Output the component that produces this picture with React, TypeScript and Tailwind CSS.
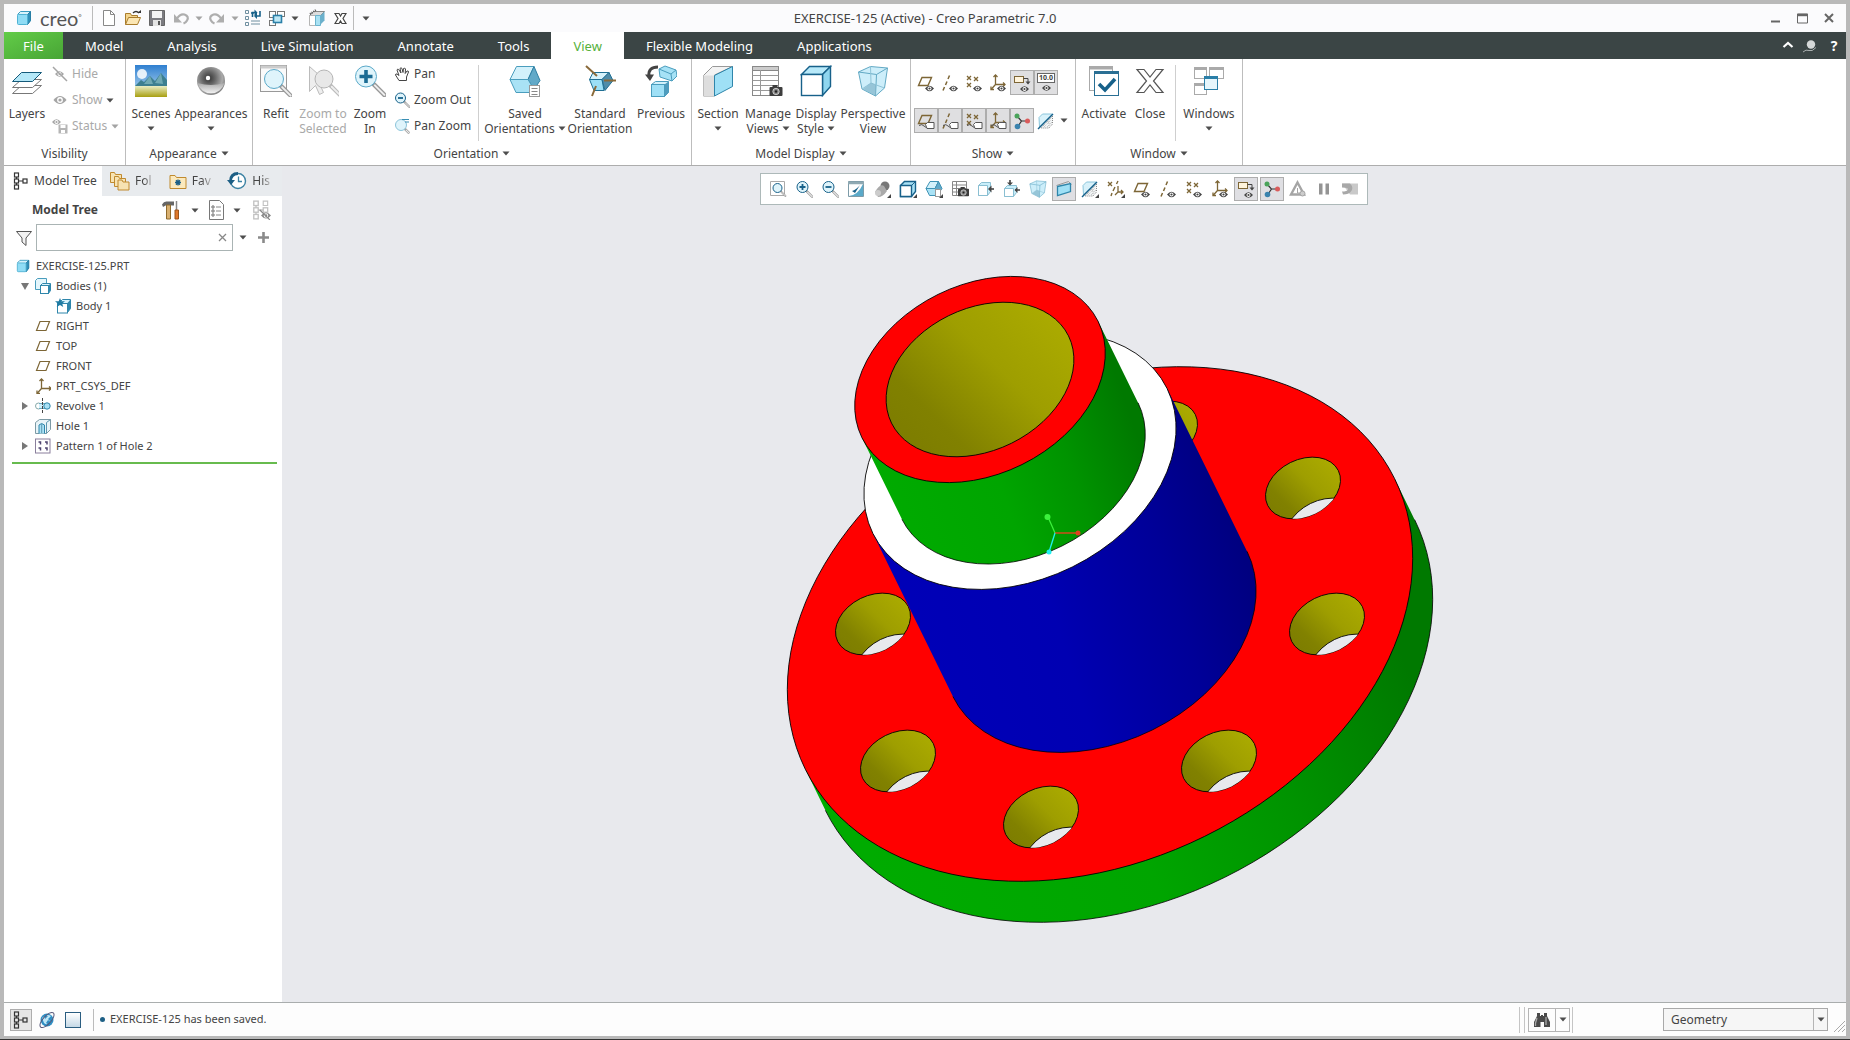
import React from "react";

type P = { children?: React.ReactNode };

const BR = "#7d6636";
const NAVY = "#17618a";

/* ---------- shared drawing helpers ---------- */

function S({ n = 16, v = n, children }: P & { n?: number; v?: number }) {
  return (
    <svg width={n} height={n} viewBox={`0 0 ${v} ${v}`} fill="none" className="shrink-0" aria-hidden="true">
      {children}
    </svg>
  );
}

function Caret({ light = false }: { light?: boolean }) {
  return (
    <svg width="8" height="5" viewBox="0 0 8 5" className="shrink-0" aria-hidden="true">
      <path d="M0.5 0.5h7L4 4.5z" fill={light ? "#a3a3a3" : "#4d4d4d"} />
    </svg>
  );
}

function Eye({ x = 0, y = 0, c = "#444" }: { x?: number; y?: number; c?: string }) {
  return (
    <g transform={`translate(${x} ${y})`}>
      <path d="M0 3Q4.500-2.500 9 3Q4.500 8.500 0 3z" fill={c} />
      <circle cx="4.500" cy="3" r="2" fill="#fff" />
      <circle cx="4.500" cy="3" r="1.100" fill={c} />
    </g>
  );
}

function Tag() {
  return (
    <g>
      <path d="M2 13.500q3-2 5 .5t4 .5" stroke="#555" />
      <path d="M8.500 12.500l2-2h6.500v6H10z" fill="#fff" stroke="#555" />
    </g>
  );
}

function Lens({ x, y, r, c = NAVY, f = "#dff4fb", h = "#999" }: { x: number; y: number; r: number; c?: string; f?: string; h?: string }) {
  const d = r * 0.75;
  return (
    <g>
      <path d={`M${x + d} ${y + d}l${r} ${r}`} stroke={h} strokeWidth={r * 0.45} strokeLinecap="round" />
      <path d={`M${x + d + 1} ${y + d + 1}l${r - 1} ${r - 1}`} stroke="#eee" strokeWidth={r * 0.2} strokeLinecap="round" />
      <circle cx={x} cy={y} r={r} fill={f} stroke={c} />
    </g>
  );
}

function Cross({ x, y, s = 4 }: { x: number; y: number; s?: number }) {
  return <path d={`M${x} ${y}l${s} ${s}m0-${s}l-${s} ${s}`} stroke={BR} strokeWidth="1.300" />;
}

function CubeShape({ n = 16, front = "#8fdcf5" }: { n?: number; front?: string }) {
  return (
    <S n={n} v={16}>
      <path d="M1.500 4.500L4.500 1.500h10v9l-3 4" fill="#d8f3fc" stroke="#3a9cc0" />
      <path d="M11.500 4.500l3-3v9l-3 4z" fill="#2f8fb8" stroke="#277ea5" />
      <rect x="1.500" y="4.500" width="10" height="10" rx="1" fill={front} stroke="#4fb2d4" />
    </S>
  );
}

function Camera({ x, y }: { x: number; y: number }) {
  return (
    <g transform={`translate(${x} ${y})`}>
      <rect y="2" width="13" height="9" rx="1" fill="#3d3d3d" />
      <rect x="3" width="5" height="3" fill="#3d3d3d" />
      <circle cx="6.500" cy="6.500" r="3.200" fill="#888" stroke="#ddd" strokeWidth=".8" />
      <circle cx="6.500" cy="6.500" r="1.200" fill="#222" />
    </g>
  );
}

/* ---------- datum icons shared by ribbon and toolbar (18 grid) ---------- */

const plane = <path d="M1.500 11.500L5 3.500h9.500l-3.500 8z" stroke={BR} strokeWidth="1.400" />;
const axis = <path d="M8.500 1.500L7 5M6 7.500l-1.500 3.500M3.500 13L2 16.500" stroke={BR} strokeWidth="1.500" />;
const points = (
  <g>
    <Cross x={2} y={2} />
    <Cross x={9} y={3} />
    <Cross x={2} y={9} />
  </g>
);
const csys = (
  <g stroke={BR} strokeWidth="1.300">
    <path d="M6.500 1v9.500H16M6.500 10.500L2 15.500" />
    <path d="M4.500 3l2-2 2 2M14 8.500l2 2-2 2M2 12.500v3h3" />
  </g>
);
const spin = (
  <g>
    <path d="M4 4l4.500 5L4.500 15M8.500 9H15" stroke="#333" strokeWidth="1.200" />
    <circle cx="4" cy="4" r="2.500" fill="#49a35a" />
    <circle cx="4.500" cy="14.500" r="2.800" fill="#3a83ae" />
    <circle cx="14.500" cy="9" r="2.500" fill="#d95b5b" />
  </g>
);
const note = (
  <g>
    <rect x="1.500" y="2.500" width="9" height="6" fill="#fff4dc" stroke={BR} />
    <path d="M10.500 4.500H15v5" stroke="#444" />
    <path d="M12.500 7.500l5 0-2.500 3z" fill="#444" />
    <Eye x={7} y={12} />
  </g>
);
const sectionMark = (
  <g>
    <path d="M2 5.500l3.500-3.500h10l-13 13z" fill="#d8f1fa" stroke="#8cc6dc" />
    <path d="M15.500 4v8l-3.500 4H4z" fill="#f2f5f6" strokeDasharray="1 1" stroke="#888" />
    <path d="M7 15l7-7M10 15l5-5M12 7v8" strokeDasharray="1 1" stroke="#bbb" />
    <path d="M1 17L16 2" stroke={NAVY} strokeWidth="1.400" />
  </g>
);
const eyed = (g: React.ReactNode) => (
  <>
    {g}
    <Eye x={8} y={11.5} />
  </>
);
const tagged = (g: React.ReactNode) => (
  <>
    {g}
    <Tag />
  </>
);

/* ---------- ribbon icons (32 grid) ---------- */

const IconLayers = (
  <S n={32}>
    <path d="M1.500 28.500l9-8h20l-9 8z" fill="#fff" stroke="#777" />
    <path d="M1.500 22.500l9-8h20l-9 8z" fill="#fff" stroke="#777" />
    <path d="M1.500 16.500l9-9h20l-9 9z" fill="#b5e8f8" stroke="#155a7a" />
  </S>
);
const IconScenes = (
  <S n={32}>
    <defs>
      <linearGradient id="sky" x1="0" y1="0" x2="0" y2="1">
        <stop offset="0" stopColor="#2f7fd0" />
        <stop offset="1" stopColor="#c9e6f5" />
      </linearGradient>
      <linearGradient id="land" x1="0" y1="0" x2="0" y2="1">
        <stop offset="0" stopColor="#e9edc4" />
        <stop offset="1" stopColor="#a89f10" />
      </linearGradient>
    </defs>
    <rect width="32" height="32" fill="url(#sky)" />
    <circle cx="7" cy="9" r="5" fill="#fff" opacity=".85" />
    <path d="M0 21l6-6 3 2 6-6 5 5 6-8 6 7v7H0z" fill="#3c7f90" />
    <path d="M15 11l3 8H9zM26 8l2 11-8-1z" fill="#6fa9b3" />
    <rect y="21" width="32" height="11" fill="url(#land)" />
  </S>
);
const IconAppear = (
  <S n={32}>
    <defs>
      <radialGradient id="ball" cx=".42" cy=".4" r=".65">
        <stop offset="0" stopColor="#333" />
        <stop offset=".35" stopColor="#666" />
        <stop offset=".75" stopColor="#aaa" />
        <stop offset="1" stopColor="#777" />
      </radialGradient>
      <linearGradient id="ballLow" x1="0" y1="0" x2="0" y2="1">
        <stop offset="0" stopColor="#aaa" />
        <stop offset="1" stopColor="#f2f2f2" />
      </linearGradient>
    </defs>
    <circle cx="16" cy="16" r="14" fill="url(#ball)" />
    <path d="M2.500 18q13.500 4 27 0A14 14 0 0 1 2.500 18z" fill="url(#ballLow)" />
    <circle cx="13" cy="13" r="2.200" fill="#fff" />
  </S>
);
const IconRefit = (
  <S n={32}>
    <rect x=".5" y=".5" width="26" height="26" fill="#fafafa" stroke="#999" />
    <path d="M.5.500h26v3H.5z" fill="#ccc" />
    <Lens x={14} y={14} r={9.5} c="#5aa9c9" />
  </S>
);
const IconZoomSel = (
  <S n={32}>
    <path d="M2.500 1.500v25l6-6 4 9 4-2-4-9 8-1z" fill="#eee" stroke="#bbb" />
    <Lens x={17} y={14} r={9} c="#b5b5b5" f="#e8e8e8" h="#bbb" />
  </S>
);
const IconZoomIn = (
  <S n={32}>
    <Lens x={12} y={11.5} r={10.5} c="#5aa9c9" />
    <path d="M12 5v13M5.500 11.500h13" stroke="#1b6c94" strokeWidth="3.600" />
  </S>
);
const IconSaved = (
  <S n={32}>
    <path d="M7.500 1.500H25l-6 13H1z" fill="#d3f1fb" stroke="#4a9dbd" />
    <path d="M25 1.500l6 14-6 9-6-10z" fill="#62a9c8" stroke="#2f7fa3" />
    <path d="M1 14.500h18l6 10-3 3H7z" fill="#a9e2f5" stroke="#4a9dbd" />
    <rect x="20.500" y="20.500" width="10" height="11" fill="#fff" stroke="#999" />
    <path d="M22.500 23.500h6m-6 3h6m-6 3h6" stroke="#888" />
  </S>
);
const IconStd = (
  <S n={32}>
    <path d="M9 7.500h16l-7 7H5.500z" fill="#d6f2fb" stroke="#1f6f93" />
    <path d="M5.500 14.500H18l2 11H10z" fill="#9bdff6" stroke="#1f6f93" />
    <path d="M25 7.500l-7 7 3 11 8-10z" fill="#4f8ca8" stroke="#1f6f93" />
    <path d="M2 1l11 10M32 15.500H20M8 31l4-10" stroke="#8a6a3a" strokeWidth="2" />
  </S>
);
const IconPrev = (
  <S n={32}>
    <path d="M13 2Q3 2 4 11" stroke="#444" strokeWidth="3" />
    <path d="M0 9.500h9L5 16z" fill="#444" />
    <path d="M14 4l6-3 11 4 1 6-5 5-12-4z" fill="#a6e2f6" stroke="#4a9dbd" />
    <path d="M31 5l-5 4-12-5M26 9l1 7" stroke="#4a9dbd" />
    <path d="M6.500 19.500l4-3h13v11l-4 4" fill="#d3f1fb" stroke="#4a9dbd" />
    <path d="M19.500 19.500l4-3v11l-4 4z" fill="#4f9cbd" />
    <rect x="6.500" y="19.500" width="13" height="12" fill="#9fe0f6" stroke="#4a9dbd" />
  </S>
);
const IconSection = (
  <S n={32}>
    <path d="M1.500 10.500l9-9h20l-18 8.500v21h-11z" fill="#f3f3f3" stroke="#999" />
    <path d="M1.500 10.500h11v20.500h-11z" fill="#dedede" />
    <path d="M12.500 10.500l18-9v20l-18 9.500z" fill="#9fe0f6" stroke="#2f86ab" />
  </S>
);
const IconManage = (
  <S n={32}>
    <rect x=".5" y="1.500" width="26" height="29" fill="#fff" stroke="#888" />
    <path d="M.5 1.500h26v4H.5z" fill="#ccc" stroke="#888" />
    <path d="M.5 10.500h26m-26 5h26m-26 5h26m-26 5h26M8.500 5v25" stroke="#999" />
    <Camera x={17.5} y={20} />
  </S>
);
const IconDisplay = (
  <S n={32}>
    <path d="M1.500 9.500l8-8h21l-8 8z" fill="#b8e9f9" stroke={NAVY} strokeWidth="1.400" />
    <path d="M22.500 9.500l8-8v20l-8 9z" fill="#8fd6ef" stroke={NAVY} strokeWidth="1.400" />
    <rect x="1.500" y="9.500" width="21" height="21" fill="#fff" stroke={NAVY} strokeWidth="1.400" />
  </S>
);
const persp = (
  <g>
    <path d="M1.500 7l12-5.500 17 1.500-3 20-9 8L5 24z" fill="#cdeefa" stroke="#62a9c4" />
    <path d="M1.500 7l18 2.500 11-6.500M19.500 9.500L18.500 31" stroke="#62a9c4" />
    <path d="M13.500 1.500L14 18 5 24M14 18l13.500 5" stroke="#8fc4d8" />
    <path d="M6 24l8-6 5 2v11z" fill="#7fb4c9" opacity=".7" />
  </g>
);
const IconActivate = (
  <S n={32}>
    <rect x="1.500" y="1.500" width="23" height="24" fill="#fff" stroke="#aaa" />
    <path d="M1.500 3h23" stroke="#aaa" strokeWidth="3" />
    <rect x="6.500" y="6.500" width="24" height="24" fill="#fff" stroke="#2a6f94" />
    <path d="M6 7.500h25" stroke="#2a6f94" strokeWidth="3" />
    <path d="M11 19l6 6 10-11" stroke="#17618a" strokeWidth="3.600" />
  </S>
);
const IconClose = (
  <S n={32}>
    <path
      d="M3 4.500h7l6 7.500 6-7.500h7L19.500 16 29 27.500h-7L16 20l-6 7.500H3L12.500 16z"
      fill="#fff"
      stroke="#555"
      strokeWidth="1.200"
    />
  </S>
);
const IconWindows = (
  <S n={32}>
    <g fill="#fff" stroke="#aaa">
      <rect x="1.500" y="2.500" width="12" height="11" />
      <rect x="16.500" y="2.500" width="14" height="11" />
      <rect x="1.500" y="18.500" width="12" height="11" />
      <path d="M1.500 4h12m3 0h14m-29 16h12" strokeWidth="2" />
    </g>
    <rect x="11.500" y="11.500" width="13" height="13" fill="#e6f6fc" stroke="#2a7fa8" />
    <path d="M11 12.500h14" stroke="#2a7fa8" strokeWidth="3" />
  </S>
);

/* ---------- small icons ---------- */

const treeGlyph = (c: string) => (
  <g stroke={c} strokeWidth="1.200">
    <rect x="2.500" y="1" width="4" height="4" />
    <rect x="2.500" y="7" width="4" height="4" />
    <rect x="2.500" y="13" width="4" height="4" />
    <rect x="11" y="7" width="4" height="4" />
    <path d="M4.500 5v2m0 4v2M6.500 9H11" />
  </g>
);
const folder = (x: number, y: number) => (
  <path d={`M${x} ${y}h4l1 2h6v8h-11z`} fill="#f7e3b2" stroke="#c08a2e" />
);
const winPair = (
  <g fill="#fff" stroke="#777">
    <rect x="1.500" y="2.500" width="6" height="6" />
    <rect x="9.500" y="2.500" width="7" height="5" />
    <rect x="1.500" y="11.500" width="6" height="5" />
    <rect x="5.500" y="6.500" width="8" height="7" fill="#bfe8f6" stroke="#2a7fa8" strokeWidth="1.600" />
  </g>
);
const undoGlyph = (
  <g>
    <path d="M5 9.500Q8 4.500 12.500 5.500q5 2 2.500 6-1 2-3.500 3" stroke="#aeaeae" strokeWidth="2.200" />
    <path d="M2 5v8.500h8z" fill="#aeaeae" />
  </g>
);

function Quick({ label, children }: P & { label: string }) {
  return (
    <button type="button" aria-label={label} className="flex h-6 w-6 items-center justify-center">
      {children}
    </button>
  );
}

function Drop({ label, light = false }: { label: string; light?: boolean }) {
  return (
    <button type="button" aria-label={label} className="flex h-6 w-3 items-center justify-center">
      <Caret light={light} />
    </button>
  );
}

/* ---------- title bar ---------- */

function TitleBar() {
  return (
    <header className="grid h-7 grid-cols-[1fr_auto_1fr] items-center bg-[#fbfbfd]">
      <div className="flex items-center">
        <span className="ml-3 flex">
          <CubeShape n={16} />
        </span>
        <span className="ml-2 font-['Lato'] text-[20px] leading-5 text-[#555]">creo</span>
        <span className="text-[8px] leading-3 text-[#555]">°</span>
        <span className="mr-1 ml-2.5 h-6 w-px bg-[#bbb]" />
        <Quick label="New">
          <S n={18}>
            <path d="M3.500 1.500h7l4 4v11h-11z" fill="#fff" stroke="#888" />
            <path d="M10.500 1.500v4h4" stroke="#888" />
          </S>
        </Quick>
        <Quick label="Open">
          <S n={18}>
            <path d="M1.500 15.500v-11h5l1 2h6v3" fill="#f3d48c" stroke="#a97c2c" />
            <path d="M1.500 15.500l3-7h12l-3 7z" fill="#fbe6b4" stroke="#a97c2c" />
            <path d="M9 4q3-3 6 0" stroke="#333" strokeWidth="1.400" />
            <path d="M13 4h4V1z" fill="#333" />
          </S>
        </Quick>
        <Quick label="Save">
          <S n={18}>
            <path d="M1.500 1.500h15v15h-15z" fill="#7b7b80" stroke="#666" />
            <rect x="4" y="2" width="10" height="7" fill="#f3f3f3" />
            <rect x="5" y="11" width="8" height="6" fill="#e3e3e3" />
            <rect x="10" y="12" width="2" height="4" fill="#555" />
          </S>
        </Quick>
        <Quick label="Undo">
          <S n={18}>{undoGlyph}</S>
        </Quick>
        <Drop label="Undo list" light />
        <Quick label="Redo">
          <S n={18}>
            <g transform="translate(18 0) scale(-1 1)">{undoGlyph}</g>
          </S>
        </Quick>
        <Drop label="Redo list" light />
        <Quick label="Regenerate">
          <S n={18}>
            <path d="M1.500 1.500h3v3h-3zM1.500 7.500h3v3h-3zM1.500 13.500h3v3h-3zM7 12h9M7 15h9" stroke="#6f8fa0" />
            <path d="M7 4h3M8.500 8V3.500h3M16 2v5h-4" stroke={NAVY} strokeWidth="1.600" />
            <path d="M10.500.5v6l3-3zM13 4v6l-3-3z" fill={NAVY} />
          </S>
        </Quick>
        <Quick label="Windows">
          <S n={18}>{winPair}</S>
        </Quick>
        <Drop label="Windows list" />
        <span className="ml-1 flex">
          <Quick label="Model view">
            <S n={18}>
              <path d="M1.500 6.500l4-4h11l-4 4z" fill="#ddd" stroke="#888" />
              <path d="M1.500 6.500h6v10h-6z" fill="#fff" stroke="#b5b5b5" />
              <path d="M7.500 6.500h5v10h-5z" fill="#a9e1f3" stroke="#6bb4ce" />
              <path d="M12.500 6.500l4-4v9l-4 4z" fill="#6bb0cc" />
              <path d="M2 5l6-4" stroke="#555" strokeDasharray="1 1" strokeWidth="2" />
            </S>
          </Quick>
        </span>
        <Quick label="Close window">
          <S n={13}>
            <path
              d="M1 1.500h4L6.500 4 8 1.500h4L9 6.500l3 5H8L6.500 9 5 11.500H1l3-5z"
              fill="#fff"
              stroke="#444"
              strokeWidth="1.200"
            />
          </S>
        </Quick>
        <span className="mr-1.5 h-6 w-px bg-[#bbb]" />
        <Drop label="Customize toolbar" />
      </div>
      <h1 className="text-[13px] leading-4 text-[#444]">EXERCISE-125 (Active) - Creo Parametric 7.0</h1>
      <div className="flex items-center justify-end gap-4 pr-3 text-[#666]">
        <button type="button" aria-label="Minimize">
          <S n={10}>
            <path d="M0 8.500h9" stroke="currentColor" strokeWidth="2" />
          </S>
        </button>
        <button type="button" aria-label="Maximize">
          <S n={11}>
            <path d="M.5 1h10v9H.5z" stroke="currentColor" />
            <path d="M0 2h11" stroke="currentColor" strokeWidth="2.400" />
          </S>
        </button>
        <button type="button" aria-label="Close">
          <S n={10}>
            <path d="M1 1l8 8m0-8L1 9" stroke="currentColor" strokeWidth="2" />
          </S>
        </button>
      </div>
    </header>
  );
}

/* ---------- tab strip ---------- */

const tabs = ["Model", "Analysis", "Live Simulation", "Annotate", "Tools", "View", "Flexible Modeling", "Applications"];

function TabStrip() {
  return (
    <nav className="flex h-[27px] bg-[#3b4545] text-[13px] text-white">
      <button type="button" className="w-[59px] bg-linear-to-br from-[#62cc48] to-[#48a535] pt-0.5">
        File
      </button>
      {tabs.map((t) => (
        <button
          key={t}
          type="button"
          className={t === "View" ? "bg-white px-[22px] pt-0.5 text-[#56b13c]" : "px-[22px] pt-0.5"}
        >
          {t}
        </button>
      ))}
      <div className="ml-auto flex items-center gap-2 pr-1">
        <button type="button" aria-label="Collapse ribbon">
          <S n={12}>
            <path d="M1.500 7L6 3l4.500 4" stroke="#fff" strokeWidth="2.200" />
          </S>
        </button>
        <button type="button" aria-label="Search commands">
          <S n={16}>
            <circle cx="9" cy="6.500" r="4.200" fill="#d5d8d8" />
            <path d="M1 14q3-3 6-1.500t7-3" stroke="#aab0b0" />
          </S>
        </button>
        <button type="button" aria-label="Help" className="w-4 text-[14px] font-bold">
          ?
        </button>
      </div>
    </nav>
  );
}

/* ---------- ribbon ---------- */

function Group({ title, caret = true, w, children }: P & { title: string; caret?: boolean; w: string }) {
  return (
    <section className={`flex flex-col border-r border-[#bdbdbd] ${w}`}>
      <div className="flex h-[82px] pt-1.5">{children}</div>
      <div className="flex items-center justify-center gap-1 pt-[5px] leading-[15px]">
        {title}
        {caret && <Caret />}
      </div>
    </section>
  );
}

function Big({ icon, a, b, caret, w, off }: { icon: React.ReactNode; a: string; b?: string; caret?: boolean; w: string; off?: boolean }) {
  return (
    <button type="button" className={`flex flex-col items-center gap-[9px] leading-[15px] ${w} ${off ? "text-[#a9a9a9]" : ""}`}>
      {icon}
      <span className="flex flex-col items-center whitespace-nowrap">
        <span>{a}</span>
        {(b || caret) && (
          <span className="flex h-[15px] items-center gap-[3px]">
            {b}
            {caret && <Caret />}
          </span>
        )}
      </span>
    </button>
  );
}

function Row({ icon, label, off, caret }: { icon: React.ReactNode; label: string; off?: boolean; caret?: boolean }) {
  return (
    <button type="button" className={`flex h-[18px] items-center gap-1 whitespace-nowrap ${off ? "text-[#a9a9a9]" : ""}`}>
      {icon}
      {label}
      {caret && <Caret light={label === "Status"} />}
    </button>
  );
}

function Toggle({ label, on, children }: P & { label: string; on?: boolean }) {
  return (
    <button
      type="button"
      aria-label={label}
      aria-pressed={!!on}
      className={`flex h-[25px] w-[24px] items-center justify-center border ${on ? "border-[#adadad] bg-[#dfdfe1]" : "border-transparent"}`}
    >
      <S n={18}>{children}</S>
    </button>
  );
}

function Ribbon() {
  return (
    <div className="flex h-[107px] overflow-hidden border-b border-[#adadad] bg-white text-[12px] text-[#444]">
      <Group title="Visibility" caret={false} w="w-[122px]">
        <Big icon={IconLayers} a="Layers" w="w-[46px]" />
        <div className="flex flex-col gap-2 pl-0.5">
          <Row
            off
            label="Hide"
            icon={
              <S n={16}>
                <Eye x={3} y={5} c="#a5a5a5" />
                <path d="M1 1l14 14" stroke="#a5a5a5" strokeWidth="1.500" />
              </S>
            }
          />
          <Row
            off
            caret
            label="Show"
            icon={
              <S n={16} v={11}>
                <Eye x={1} y={2.5} c="#a5a5a5" />
              </S>
            }
          />
          <Row
            off
            caret
            label="Status"
            icon={
              <S n={16}>
                <Eye x={0} y={1} c="#a5a5a5" />
                <path d="M6.500 6.500h9v9h-9z" fill="#b5b5b5" />
                <path d="M8.500 7h5v3h-5zM9 12h4v3H9z" fill="#fff" />
              </S>
            }
          />
        </div>
      </Group>
      <Group title="Appearance" w="w-[127px]">
        <Big icon={IconScenes} a="Scenes" caret w="w-[50px]" />
        <Big icon={IconAppear} a="Appearances" caret w="w-[70px]" />
      </Group>
      <Group title="Orientation" w="w-[439px]">
        <Big icon={IconRefit} a="Refit" w="w-[46px]" />
        <Big icon={IconZoomSel} a="Zoom to" b="Selected" off w="w-[48px]" />
        <Big icon={IconZoomIn} a="Zoom" b="In" w="w-[46px]" />
        <div className="flex w-[85px] flex-col gap-2 pl-px">
          <Row
            label="Pan"
            icon={
              <S n={16}>
                <path
                  d="M5 14.500L1.500 9q0-1.500 1.500-1l2 1.500L3 4q.5-1.500 1.700-.5L7 7 6 2.500Q7 1 8 2.500l1 4 .5-4q1.500-1 2 .5l-.3 4.500L13 5q1.500-.5 1.500 1L12.500 11v3.500z"
                  fill="#fff"
                  stroke="#444"
                />
              </S>
            }
          />
          <Row
            label="Zoom Out"
            icon={
              <S n={16}>
                <Lens x={6.5} y={6} r={5} />
                <path d="M4 6h5" stroke={NAVY} strokeWidth="1.800" />
              </S>
            }
          />
          <Row
            label="Pan Zoom"
            icon={
              <S n={16}>
                <Lens x={7} y={7} r={5.5} c="#8cc4da" />
                <path d="M8 1.500h7M11 4h4" stroke="#3a8fb4" />
              </S>
            }
          />
        </div>
        <span className="mr-[5px] h-[76px] w-px bg-[#cfcfcf]" />
        <Big icon={IconSaved} a="Saved" b="Orientations" caret w="w-[82px]" />
        <Big icon={IconStd} a="Standard" b="Orientation" w="w-[68px]" />
        <Big icon={IconPrev} a="Previous" w="w-[54px]" />
      </Group>
      <Group title="Model Display" w="w-[219px]">
        <Big icon={IconSection} a="Section" caret w="w-[52px]" />
        <Big icon={IconManage} a="Manage" b="Views" caret w="w-[48px]" />
        <Big icon={IconDisplay} a="Display" b="Style" caret w="w-[48px]" />
        <Big icon={<S n={32}>{persp}</S>} a="Perspective" b="View" w="w-[66px]" />
      </Group>
      <Group title="Show" w="w-[165px]">
        <div className="flex flex-col gap-[13px] pt-[5px] pl-[3px]">
          <div className="flex">
            <Toggle label="Plane display">{eyed(plane)}</Toggle>
            <Toggle label="Axis display">{eyed(axis)}</Toggle>
            <Toggle label="Point display">{eyed(points)}</Toggle>
            <Toggle label="Csys display">{eyed(csys)}</Toggle>
            <Toggle label="Annotation display" on>
              {note}
            </Toggle>
            <button
              type="button"
              aria-pressed="true"
              className="flex h-[25px] w-[24px] flex-col items-center justify-center border border-[#adadad] bg-[#dfdfe1]"
            >
              <span className="border border-[#666] bg-white px-px text-[7px] leading-[8px] font-bold">10.0</span>
              <S n={9} v={9}>
                <Eye x={0} y={2} />
              </S>
            </button>
          </div>
          <div className="flex items-center">
            <Toggle label="Plane tags" on>
              {tagged(plane)}
            </Toggle>
            <Toggle label="Axis tags" on>
              {tagged(axis)}
            </Toggle>
            <Toggle label="Point tags" on>
              {tagged(points)}
            </Toggle>
            <Toggle label="Csys tags" on>
              {tagged(csys)}
            </Toggle>
            <Toggle label="Spin center" on>
              {spin}
            </Toggle>
            <Toggle label="Section hatching">{sectionMark}</Toggle>
            <Drop label="Section hatching list" />
          </div>
        </div>
      </Group>
      <Group title="Window" w="w-[167px]">
        <span className="w-0.5" />
        <Big icon={IconActivate} a="Activate" w="w-[52px]" />
        <Big icon={IconClose} a="Close" w="w-[40px]" />
        <span className="mx-[5px] h-[76px] w-px bg-[#cfcfcf]" />
        <Big icon={IconWindows} a="Windows" caret w="w-[56px]" />
      </Group>
    </div>
  );
}

/* ---------- navigator ---------- */

const bodyCube = (
  <g>
    <path d="M5.500 7.500l2-2h8v7l-2 3" fill="#d8f3fc" stroke="#2f86ab" />
    <path d="M13 8l2.500-2.500v7l-2.500 3z" fill="#2f86ab" />
    <rect x="5.500" y="7.500" width="8" height="8" fill="#fff" stroke="#2f86ab" />
  </g>
);

type Node = { label: string; pad: string; arrow?: "down" | "right"; icon: React.ReactNode };

const planeIcon = (
  <S n={16}>
    <path d="M1.500 12.500l3.500-9h9.500l-3.500 9z" stroke={BR} strokeWidth="1.200" />
  </S>
);

const nodes: Node[] = [
  {
    label: "Bodies (1)",
    pad: "pl-4",
    arrow: "down",
    icon: (
      <S n={16}>
        <path d="M.5 2.500l2-2h9v8l-2 3H.5z" fill="#e4f6fc" stroke="#4a9dbd" />
        {bodyCube}
      </S>
    ),
  },
  {
    label: "Body 1",
    pad: "pl-9",
    icon: (
      <S n={16}>
        <path d="M4.500 4.500l3-3h8v9l-3 4" fill="#d8f3fc" stroke="#2f86ab" />
        <path d="M12.500 5l3-3.500v9l-3 4z" fill="#2f86ab" />
        <rect x="2.500" y="5.500" width="10" height="9.500" fill="#fff" stroke="#2f86ab" />
        <path d="M5 0l1.300 3.300H10L7.200 5.500l1 3.500L5 7 1.800 9l1-3.500L0 3.300h3.700z" fill="#1f7ba3" />
      </S>
    ),
  },
  { label: "RIGHT", pad: "pl-4", icon: planeIcon },
  { label: "TOP", pad: "pl-4", icon: planeIcon },
  { label: "FRONT", pad: "pl-4", icon: planeIcon },
  {
    label: "PRT_CSYS_DEF",
    pad: "pl-4",
    icon: <S n={16}>{csys}</S>,
  },
  {
    label: "Revolve 1",
    pad: "pl-4",
    arrow: "right",
    icon: (
      <S n={16}>
        <circle cx="3.500" cy="8" r="3" fill="#fff" stroke="#8aa" />
        <path d="M4 5.500h6v5H4" fill="#cfeffa" stroke="#6aa9c0" />
        <circle cx="12" cy="8" r="3.200" fill="#a9e1f5" stroke="#2f86ab" />
        <path d="M7.500 0v16" stroke="#444" strokeDasharray="3 1" />
      </S>
    ),
  },
  {
    label: "Hole 1",
    pad: "pl-4",
    icon: (
      <S n={16}>
        <path d="M.5 4.500l4-3h11v10l-4 4H.5z" fill="#e8f4f8" stroke="#7d9aa5" />
        <path d="M4 15.500V7q2.500-3 5.500 0v8.500" fill="#a9e1f5" stroke="#2f86ab" />
        <path d="M11.500 4.500v11M6.700 6v9M11.500 4.500l4-3" stroke="#5d98b0" />
      </S>
    ),
  },
  {
    label: "Pattern 1 of Hole 2",
    pad: "pl-4",
    arrow: "right",
    icon: (
      <S n={16}>
        <rect x=".5" y="1" width="14.500" height="14" fill="#fff" stroke="#8a7f9c" />
        <path d="M3.500 4h2v2.500M10 4h2v2.500M3.500 10h2v2.500M10 10h2v2.500" stroke="#4f4470" strokeWidth="1.500" />
      </S>
    ),
  },
];

function SideTab({ icon, label, title }: { icon: React.ReactNode; label: string; title: string }) {
  return (
    <button type="button" title={title} className="flex min-w-0 flex-1 items-center gap-[5px] pl-2">
      {icon}
      <span className="bg-linear-to-r from-[#444] from-50% to-[#bbb] bg-clip-text text-left whitespace-nowrap text-transparent">
        {label}
      </span>
    </button>
  );
}

function Navigator() {
  return (
    <aside className="flex w-[278px] shrink-0 flex-col bg-white text-[12px] text-[#444]">
      <div className="flex h-[30px] bg-[#e8ebee] pr-1">
        <button type="button" className="flex w-[98px] items-center gap-1 bg-white pl-2">
          <S n={18}>{treeGlyph("#333")}</S>
          <span className="whitespace-nowrap">Model Tree</span>
        </button>
        <SideTab
          label="Fol"
          title="Folder Browser"
          icon={
            <S n={20}>
              {folder(0.5, 1.5)}
              {folder(4.5, 5.5)}
              {folder(8, 9)}
            </S>
          }
        />
        <SideTab
          label="Fav"
          title="Favorites"
          icon={
            <S n={18}>
              <path d="M1 3.500h5l1.500 2H17v11H1z" fill="#fbe9bd" stroke="#c08a2e" />
              <path d="M9 7.500v6m-3-3h6m-5-2.300l4 4.600m0-4.600l-4 4.600" stroke="#1d5f85" strokeWidth="1.300" />
            </S>
          }
        />
        <SideTab
          label="His"
          title="History"
          icon={
            <S n={20}>
              <circle cx="11" cy="10" r="7.500" fill="#fff" stroke="#3b82a3" strokeWidth="1.400" />
              <path d="M11 2.500Q3.500 2.500 3.500 10.500" stroke="#1d5f85" strokeWidth="3" />
              <path d="M0 9h8l-4 5z" fill="#1d5f85" />
              <path d="M11.500 5.500v5H15" stroke="#3b82a3" strokeWidth="1.300" />
            </S>
          }
        />
      </div>

      <div className="flex h-7 items-center pr-[11px] pl-7">
        <h2 className="flex-1 font-bold">Model Tree</h2>
        <button type="button" aria-label="Tree tools">
          <S n={20}>
            <path d="M1 4.500Q3 1 6 1.500h7v4h-2.500L9.500 5H5.500L2 7z" fill="#666" />
            <path d="M5.500 5h4v14h-4z" fill="#d9b070" stroke="#8f6a2c" />
            <path d="M15.500 1v9" stroke="#888" strokeWidth="1.500" />
            <path d="M14 10h3.500v9H14z" fill="#e0782a" stroke="#9c531b" />
          </S>
        </button>
        <span className="flex pl-2">
          <Drop label="Tools list" />
        </span>
        <button type="button" aria-label="Display settings" className="ml-1.5">
          <S n={20}>
            <path d="M2.500.5h10l4 4v15h-14z" fill="#fff" stroke="#777" />
            <circle cx="6" cy="7" r="1.200" stroke="#666" />
            <circle cx="6" cy="11" r="1.200" stroke="#666" />
            <circle cx="6" cy="15" r="1.200" stroke="#666" />
            <path d="M9 7h5m-5 4h5m-5 4h5" stroke="#888" />
          </S>
        </button>
        <span className="flex pl-1">
          <Drop label="Settings list" />
        </span>
        <button type="button" aria-label="Hide tree items" className="ml-2">
          <S n={20} v={18}>
            {treeGlyph("#c2c2c2")}
            <path d="M11 1h4v4h-4z" stroke="#c2c2c2" />
            <Eye x={9} y={11} c="#888" />
            <path d="M8 9l9 9" stroke="#888" />
          </S>
        </button>
      </div>

      <div className="flex h-[27px] items-center pl-3">
        <S n={16}>
          <path d="M.5 1.500h15L10 8v7.500L6 12V8z" fill="#f2f2f2" stroke="#555" />
        </S>
        <div className="relative ml-1 h-[27px] w-[197px]">
          <input aria-label="Filter tree" type="text" className="h-full w-full border border-[#aab4b4] bg-white pr-6 pl-1 outline-none" />
          <button type="button" aria-label="Clear filter" className="absolute top-[9px] right-1.5">
            <S n={9}>
              <path d="M1 1l7 7m0-7L1 8" stroke="#888" strokeWidth="1.300" />
            </S>
          </button>
        </div>
        <span className="flex pl-1">
          <Drop label="Filter list" />
        </span>
        <button type="button" aria-label="Add filter" className="ml-[9px]">
          <S n={11}>
            <path d="M5.500 0v11M0 5.500h11" stroke="#8a8a8a" strokeWidth="2.600" />
          </S>
        </button>
      </div>

      <div className="mt-[5px] flex-1 pr-[5px] pl-2 text-[11px]">
        <ul>
          <li className="flex h-5 items-center gap-1.5 pl-1">
            <CubeShape n={14} />
            EXERCISE-125.PRT
          </li>
          {nodes.map((n) => (
            <li key={n.label} className={`flex h-5 items-center ${n.pad}`}>
              <span className="-ml-2 flex w-[15px]">
                {n.arrow && (
                  <S n={10}>
                    <path d={n.arrow === "down" ? "M1 2h8L5 9z" : "M2 1v8l6-4z"} fill="#777" />
                  </S>
                )}
              </span>
              {n.icon}
              <span className="pl-[5px]">{n.label}</span>
            </li>
          ))}
        </ul>
        <div className="mt-1.5 h-0.5 bg-[#67bb4e]" />
      </div>
    </aside>
  );
}

/* ---------- model ---------- */

const ANGLE = -26.26;
const COS = 0.8968;
const SIN = 0.4425;
const MAJOR = 1.0506;
const MINOR = 0.7571;

function Disc({ x, y, r, fill }: { x: number; y: number; r: number; fill: string }) {
  return (
    <ellipse
      cx={x}
      cy={y}
      rx={r * MAJOR}
      ry={r * MINOR}
      transform={`rotate(${ANGLE} ${x} ${y})`}
      fill={fill}
      stroke="#000"
      strokeWidth=".8"
    />
  );
}

/* Cylinder wall swept from a top rim to a bottom rim of the same size. */
function Wall({ x, y, bx, by, r, fill }: { x: number; y: number; bx: number; by: number; r: number; fill: string }) {
  const a = r * MAJOR;
  const b = r * MINOR;
  const dx = a * COS;
  const dy = a * SIN;
  const arc = `A${a} ${b} ${ANGLE} 0 1 ${bx - dx} ${by + dy}`;
  return (
    <g>
      <path d={`M${x + dx} ${y - dy}L${bx + dx} ${by - dy}${arc}L${x - dx} ${y + dy}Z`} fill={fill} />
      <path d={`M${bx + dx} ${by - dy}${arc}`} stroke="#000" strokeWidth=".8" fill="none" />
    </g>
  );
}

const holes = [
  [1160, 432],
  [1303, 488],
  [1327, 624],
  [1219, 761],
  [1041, 817],
  [898, 761],
  [873, 624],
];

function Model() {
  return (
    <svg viewBox="282 166 1564 836" className="h-full w-full" role="img" aria-label="Flange model">
      <defs>
        <linearGradient id="green" x1="0" y1=".5" x2="1" y2=".2">
          <stop offset="0" stopColor="#00ab00" />
          <stop offset=".4" stopColor="#00a500" />
          <stop offset=".65" stopColor="#009300" />
          <stop offset=".9" stopColor="#007900" />
          <stop offset="1" stopColor="#007900" />
        </linearGradient>
        <linearGradient id="blue" x1="0" y1=".5" x2="1" y2=".2">
          <stop offset="0" stopColor="#0000b8" />
          <stop offset=".4" stopColor="#0000b2" />
          <stop offset=".7" stopColor="#000098" />
          <stop offset=".9" stopColor="#000080" />
          <stop offset="1" stopColor="#000080" />
        </linearGradient>
        <linearGradient id="bore" x1="0" y1=".6" x2="1" y2=".35">
          <stop offset="0" stopColor="#7d7d00" />
          <stop offset=".2" stopColor="#818100" />
          <stop offset=".6" stopColor="#9e9e00" />
          <stop offset="1" stopColor="#abab00" />
        </linearGradient>
        {holes.map(([x, y]) => (
          <clipPath key={`${x}-${y}`} id={`hole-${x}-${y}`}>
            <ellipse cx={x} cy={y} rx={39.4} ry={28.4} transform={`rotate(${ANGLE} ${x} ${y})`} />
          </clipPath>
        ))}
      </defs>
      <Wall x={1100} y={624} bx={1120} by={665} r={312.7} fill="url(#green)" />
      <Disc x={1100} y={624} r={312.7} fill="#ff0000" />
      {holes.map(([x, y]) => (
        <g key={`${x}-${y}`}>
          <Disc x={x} y={y} r={37.5} fill="url(#bore)" />
          <g clipPath={`url(#hole-${x}-${y})`}>
            <Disc x={x + 20} y={y + 41} r={37.5} fill="#e8e9ed" />
          </g>
        </g>
      ))}
      <Wall x={1020} y={461} bx={1100} by={624} r={156.1} fill="url(#blue)" />
      <Disc x={1020} y={461} r={156.1} fill="#ffffff" />
      <Wall x={980} y={379.5} bx={1020} by={461} r={125.3} fill="url(#green)" />
      <Disc x={980} y={379.5} r={125.3} fill="#ff0000" />
      <Disc x={980} y={379.5} r={93.9} fill="url(#bore)" />
      <path d="M1055 533l-7-16" stroke="#3cf03c" strokeWidth="1.300" />
      <path d="M1055 533h22" stroke="#f04020" strokeWidth="1.300" />
      <path d="M1055 533l-6 19" stroke="#20f0f0" strokeWidth="1.300" />
      <circle cx="1047.500" cy="517" r="3" fill="#3cf03c" />
      <circle cx="1078" cy="533" r="2.500" fill="#e04020" />
      <circle cx="1049" cy="552" r="2.500" fill="#20f0f0" />
    </svg>
  );
}

const corner = <path d="M18 14v4h-4z" fill="#444" />;

const tools: { label: string; on?: boolean; icon: React.ReactNode }[] = [
  {
    label: "Refit",
    icon: (
      <>
        <path d="M1.500 1.500h14v14h-14z" fill="#fff" stroke="#aaa" />
        <Lens x={8.5} y={8} r={4.5} />
      </>
    ),
  },
  {
    label: "Zoom In",
    icon: (
      <>
        <Lens x={7.5} y={7} r={5.5} />
        <path d="M7.500 4v6m-3-3h6" stroke={NAVY} strokeWidth="1.800" />
      </>
    ),
  },
  {
    label: "Zoom Out",
    icon: (
      <>
        <Lens x={7.5} y={7} r={5.5} />
        <path d="M4.500 7h6" stroke={NAVY} strokeWidth="1.800" />
      </>
    ),
  },
  {
    label: "Repaint",
    icon: (
      <>
        <path d="M1.500 1.500h15v15h-15z" fill="#fff" stroke="#7d9ba8" />
        <path d="M1 3h16" stroke="#8fa9b3" strokeWidth="2.500" />
        <path d="M2 16q9-1 14-12v12z" fill="#5aa9c9" />
        <path d="M5 11q4-1 8-6l-5 8z" fill="#17618a" />
      </>
    ),
  },
  {
    label: "Rendering",
    icon: (
      <>
        <circle cx="12" cy="6" r="4.500" fill="#777" />
        <path d="M2 12q5-9 9-6l3 5q-4 6-9 6z" fill="#aaa" />
        <circle cx="5" cy="13" r="3" fill="#ccc" />
        {corner}
      </>
    ),
  },
  {
    label: "Display Style",
    icon: (
      <>
        <path d="M1.500 5.500l4-4h11v10l-4 5h-11z" fill="#a9e1f5" stroke={NAVY} strokeWidth="1.400" />
        <path d="M1.500 5.500h11v11h-11z" fill="#fff" stroke={NAVY} strokeWidth="1.400" />
        <path d="M12.500 5.500l4-4" stroke={NAVY} />
        {corner}
      </>
    ),
  },
  {
    label: "Saved Orientations",
    icon: (
      <>
        <path d="M5 1.500h8.500l-3.500 7H1z" fill="#d3f1fb" stroke="#3f93b5" />
        <path d="M13.500 1.500l3.500 7-3.500 5-3.500-5z" fill="#62a9c8" stroke="#3f93b5" />
        <path d="M1 8.500h9l3.500 5-1.500 2H4.500z" fill="#a9e2f5" stroke="#3f93b5" />
        <rect x="10.500" y="9.500" width="5" height="7" fill="#fff" stroke="#999" />
        {corner}
      </>
    ),
  },
  {
    label: "View Manager",
    icon: (
      <>
        <path d="M1.500 1.500h14v14h-14zM1.500 5h14m-14 3.500h14m-14 3.500h14M5.500 1.500v14" fill="#fff" stroke="#888" />
        <g transform="translate(7 7) scale(.85)">
          <Camera x={0} y={0} />
        </g>
      </>
    ),
  },
  {
    label: "Orient forward",
    icon: (
      <>
        <path d="M1.500 5.500l3-3h9v9l-3 4h-9z" fill="#c9eefa" stroke="#8abfd2" />
        <path d="M1.500 5.500h9v10h-9z" fill="#fff" stroke="#8abfd2" />
        <path d="M17 9h-5" stroke="#444" strokeWidth="1.600" />
        <path d="M14.500 5.500v7L11 9z" fill="#444" />
      </>
    ),
  },
  {
    label: "Orient normal",
    icon: (
      <>
        <path d="M1.500 8.500l3-3h9v7l-3 4h-9z" fill="#c9eefa" stroke="#8abfd2" />
        <path d="M1.500 8.500h9v8h-9z" fill="#fff" stroke="#8abfd2" />
        <path d="M17 10h-5M7 0v4" stroke="#444" strokeWidth="1.600" />
        <path d="M14.500 7v6L11.500 10zM4 2.500h6L7 5.500z" fill="#444" />
      </>
    ),
  },
  { label: "Perspective View", icon: <g transform="scale(.56)">{persp}</g> },
  {
    label: "Section plane",
    on: true,
    icon: (
      <>
        <path d="M1.500 5.500l12-4 3 3" stroke="#999" />
        <path d="M2.500 6.500l13-3v8l-13 4z" fill="#9fe0f6" stroke="#2f86ab" strokeWidth="1.300" />
      </>
    ),
  },
  {
    label: "Section hatching",
    icon: (
      <>
        {sectionMark}
        {corner}
      </>
    ),
  },
  {
    label: "Datum filters",
    icon: (
      <>
        <Cross x={1} y={2} />
        <path d="M11 1L9.500 4M8 7l-2 4M5 13l-1 3" stroke={BR} strokeWidth="1.400" />
        <path d="M11 6v6h5M11 12l-3 3M14 10l2 2-2 2" stroke={BR} strokeWidth="1.300" />
        {corner}
      </>
    ),
  },
  { label: "Planes", icon: eyed(plane) },
  { label: "Axes", icon: eyed(axis) },
  { label: "Points", icon: eyed(points) },
  { label: "Csys", icon: eyed(csys) },
  { label: "Annotations", on: true, icon: note },
  { label: "Spin center", on: true, icon: spin },
  {
    label: "Simulation",
    icon: (
      <>
        <path d="M8.500 2.500l6.500 12H2z" stroke="#a5a5a5" strokeWidth="2.400" />
        <path d="M8.500 8v5h4" stroke="#a5a5a5" />
        <circle cx="13.500" cy="13.500" r="2.500" fill="#ccc" stroke="#a5a5a5" />
      </>
    ),
  },
  {
    label: "Pause",
    icon: <path d="M4 3.500h3.500v11H4zM10.500 3.500H14v11h-3.500z" fill="#949494" />,
  },
  {
    label: "Results",
    icon: (
      <>
        <path d="M1 3.500h16v11H9z" fill="#c9c9c9" />
        <path d="M1 3.500h8q4 4 1 8-2 3-8 3l-1-3q5 0 6-2t-6-2z" fill="#a8a8a8" />
      </>
    ),
  },
];

function Viewport() {
  return (
    <main className="relative min-w-0 flex-1 bg-[#e8e9ed]">
      <Model />
      <div className="absolute top-[7px] left-1/2 flex -translate-x-1/2 border border-[#adb9b9] bg-white px-1 py-[3px]">
        {tools.map((t) => (
          <button
            key={t.label}
            type="button"
            aria-label={t.label}
            aria-pressed={!!t.on}
            className={`mx-px flex h-6 w-6 items-center justify-center border ${t.on ? "border-[#adadad] bg-[#dfdfe3]" : "border-transparent"}`}
          >
            <S n={18}>{t.icon}</S>
          </button>
        ))}
      </div>
    </main>
  );
}

/* ---------- status bar ---------- */

function StatusBar() {
  return (
    <footer className="flex h-[34px] items-center border-t border-[#a9adad] bg-[#fdfdfd] text-[12px] text-[#444]">
      <button type="button" aria-label="Toggle navigator" className="ml-1.5 flex h-[22px] w-[22px] items-center justify-center border border-[#adadad] bg-[#e6e6e6]">
        <S n={18}>{treeGlyph("#333")}</S>
      </button>
      <button type="button" aria-label="Toggle browser" className="ml-1.5">
        <S n={18}>
          <circle cx="9" cy="9" r="6.500" fill="#2f8fc4" />
          <path d="M4 7q5-5 9-2l-3 3 3 3q-4 4-7 1z" fill="#bfe6f5" />
          <path d="M6 4l4 1-3 3zM10 9l3 2-2 3-3-2z" fill="#2f8fc4" />
          <ellipse cx="9" cy="9" rx="9.500" ry="4" transform="rotate(-48 9 9)" stroke="#557" />
        </S>
      </button>
      <button type="button" aria-label="Full screen" className="ml-[9px] h-4 w-4 border border-[#2a5d80] bg-linear-to-b from-white to-[#c5d9e6]" />
      <span className="ml-3 h-[22px] w-px bg-[#bbb]" />
      <span className="ml-1.5 h-[5px] w-[5px] rounded-full bg-[#1d5f85]" />
      <p className="ml-[5px] text-[11px]">EXERCISE-125 has been saved.</p>
      <div className="ml-auto flex items-center">
        <span className="h-[26px] w-px bg-[#c5c5c5]" />
        <span className="ml-1 h-[26px] w-px bg-[#c5c5c5]" />
        <div className="ml-[3px] flex h-6 w-[42px] border border-[#b5b5b5]">
          <button type="button" aria-label="Find" className="flex flex-1 items-center justify-center">
            <S n={18}>
              <path d="M4 2h3v3h1V4h2v1h1V2h3v3l3 6v5h-6v-5H7.500v5H1v-5l3-6z" fill="#4a4a4a" />
              <path d="M4 7l-1.500 5v3M13 6v8" stroke="#aaa" strokeWidth="1.300" />
            </S>
          </button>
          <button type="button" aria-label="Find list" className="flex w-3.5 items-center justify-center border-l border-[#b5b5b5]">
            <Caret />
          </button>
        </div>
        <span className="ml-0.5 h-[26px] w-px bg-[#c5c5c5]" />
        <div className="relative ml-[90px] h-[23px] w-[165px]">
          <select aria-label="Selection filter" className="h-full w-full appearance-none border border-[#a9a9a9] bg-[#f6f6f6] pl-[7px] outline-none" defaultValue="Geometry">
            <option>Geometry</option>
          </select>
          <span className="pointer-events-none absolute inset-y-px right-px flex w-3.5 items-center justify-center border-l border-[#b5b5b5]">
            <Caret />
          </span>
        </div>
        <span className="ml-1 flex self-end">
          <S n={14}>
            <path d="M2 13L13 2M6 13l7-7M10 13l3-3" stroke="#aaa" />
          </S>
        </span>
      </div>
    </footer>
  );
}

export default function App() {
  return (
    <div className="flex h-screen flex-col border-b border-[#333] font-['Noto_Sans','Open_Sans',sans-serif]">
      <div className="flex min-h-0 flex-1 flex-col border-4 border-b-[3px] border-[#b9b9b9]">
        <TitleBar />
        <TabStrip />
        <Ribbon />
        <div className="flex min-h-0 flex-1">
          <Navigator />
          <Viewport />
        </div>
        <StatusBar />
      </div>
    </div>
  );
}
